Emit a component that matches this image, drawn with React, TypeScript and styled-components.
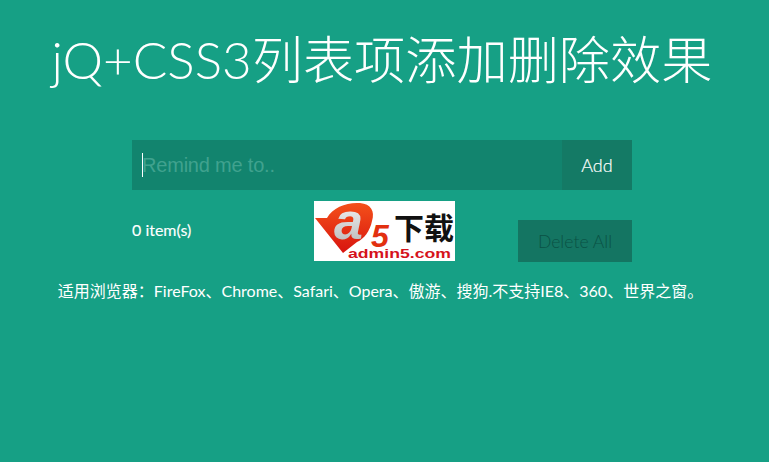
import React from 'react'
import styled, { createGlobalStyle } from 'styled-components'

const cjk = '"Lato", "Noto Sans CJK SC", sans-serif'

const GlobalStyle = createGlobalStyle`
  html, body {
    margin: 0;
    padding: 0;
    height: 100%;
    background: #16a085;
  }
  body {
    font-family: ${cjk};
    color: #fff;
    overflow: hidden;
  }
`

const Page = styled.div`
  width: 764px;
  height: 462px;
  padding-top: 29px;
  box-sizing: border-box;
`

const Title = styled.h1`
  margin: 0 0 50px;
  height: 61px;
  line-height: 61px;
  font-size: 51.2px;
  font-weight: 300;
  text-align: center;
  white-space: nowrap;
`

const Wrapper = styled.div`
  width: 500px;
  margin: 0 auto;
`

const InputRow = styled.form`
  position: relative;
  display: flex;
  height: 50px;
`

const TaskInput = styled.input`
  flex: 1;
  min-width: 0;
  border: 0;
  outline: 0;
  padding: 0 10px;
  background: #12846e;
  color: #fff;
  font-family: "Liberation Sans", Arial, sans-serif;
  font-size: 20px;
  letter-spacing: -0.2px;

  &::placeholder {
    color: #40a28e;
    opacity: 1;
  }
`

const Caret = styled.span`
  position: absolute;
  left: 10px;
  top: 13px;
  width: 1px;
  height: 24px;
  background: #fff;
`

const AddButton = styled.button`
  width: 70px;
  border: 0;
  padding: 0;
  background: #147a65;
  color: #fff;
  font-family: ${cjk};
  font-size: 18px;
  font-weight: 300;
  -webkit-text-stroke: 0.2px #fff;
`

const MetaRow = styled.div`
  display: grid;
  grid-template-columns: 182px 141px 1fr;
  align-items: start;
  padding-top: 11px;
`

const Count = styled.span`
  margin-top: 20px;
  font-size: 16px;
  line-height: 18px;
  -webkit-text-stroke: 0.12px #fff;
`

const Logo = styled.div`
  width: 141px;
  height: 60px;
  background: #fff;
`

const LogoImage = styled.svg`
  display: block;
  overflow: visible;
`

const DeleteButton = styled.button`
  justify-self: end;
  width: 114px;
  height: 42px;
  margin-top: 19px;
  border: 0;
  padding: 0;
  background: #147562;
  color: #0a5245;
  font-family: ${cjk};
  font-size: 17.6px;
  font-weight: 300;
`

const Note = styled.p`
  margin: 19px 0 0;
  padding-right: 3px;
  font-size: 16px;
  line-height: 20px;
  text-align: center;
  white-space: nowrap;
`

const A5Logo = () => (
  <LogoImage width="141" height="60" viewBox="0 0 141 60">
    <defs>
      <linearGradient id="red" x1="0" y1="0" x2="0" y2="1">
        <stop offset="0" stopColor="#f4511a" />
        <stop offset="1" stopColor="#d8140f" />
      </linearGradient>
      <linearGradient id="silver" x1="0" y1="0" x2="0" y2="1">
        <stop offset="0" stopColor="#ffffff" />
        <stop offset="1" stopColor="#b4b4b4" />
      </linearGradient>
    </defs>
    <path d="M1 17 L13 17 C19 6 33 1 46 2 C57 3 61 10 58 20 C56 30 50 38 43 41 L29 52 Z" fill="url(#red)" />
    <text x="20" y="38" fontFamily="Liberation Sans, sans-serif" fontSize="52" fontWeight="700" fontStyle="italic" fill="url(#silver)">a</text>
    <text x="57" y="46" fontFamily="Liberation Sans, sans-serif" fontSize="32" fontWeight="700" fontStyle="italic" fill="#e2300f">5</text>
    <text x="80" y="38" fontFamily="Noto Sans CJK SC, sans-serif" fontSize="30" fontWeight="700" fill="#111">下载</text>
    <text x="34" y="57" fontFamily="Liberation Sans, sans-serif" fontSize="13" fontWeight="700" fill="#d5121b" textLength="103" lengthAdjust="spacingAndGlyphs">admin5.com</text>
  </LogoImage>
)

export default function App() {
  return (
    <Page>
      <GlobalStyle />
      <Title>jQ+CSS3列表项添加删除效果</Title>
      <Wrapper>
        <InputRow onSubmit={(e) => e.preventDefault()}>
          <TaskInput placeholder="Remind me to.." />
          <Caret />
          <AddButton type="submit">Add</AddButton>
        </InputRow>
        <MetaRow>
          <Count>0 item(s)</Count>
          <Logo>
            <A5Logo />
          </Logo>
          <DeleteButton type="button">Delete All</DeleteButton>
        </MetaRow>
      </Wrapper>
      <Note>适用浏览器：FireFox、Chrome、Safari、Opera、傲游、搜狗.不支持IE8、360、世界之窗。</Note>
    </Page>
  )
}
